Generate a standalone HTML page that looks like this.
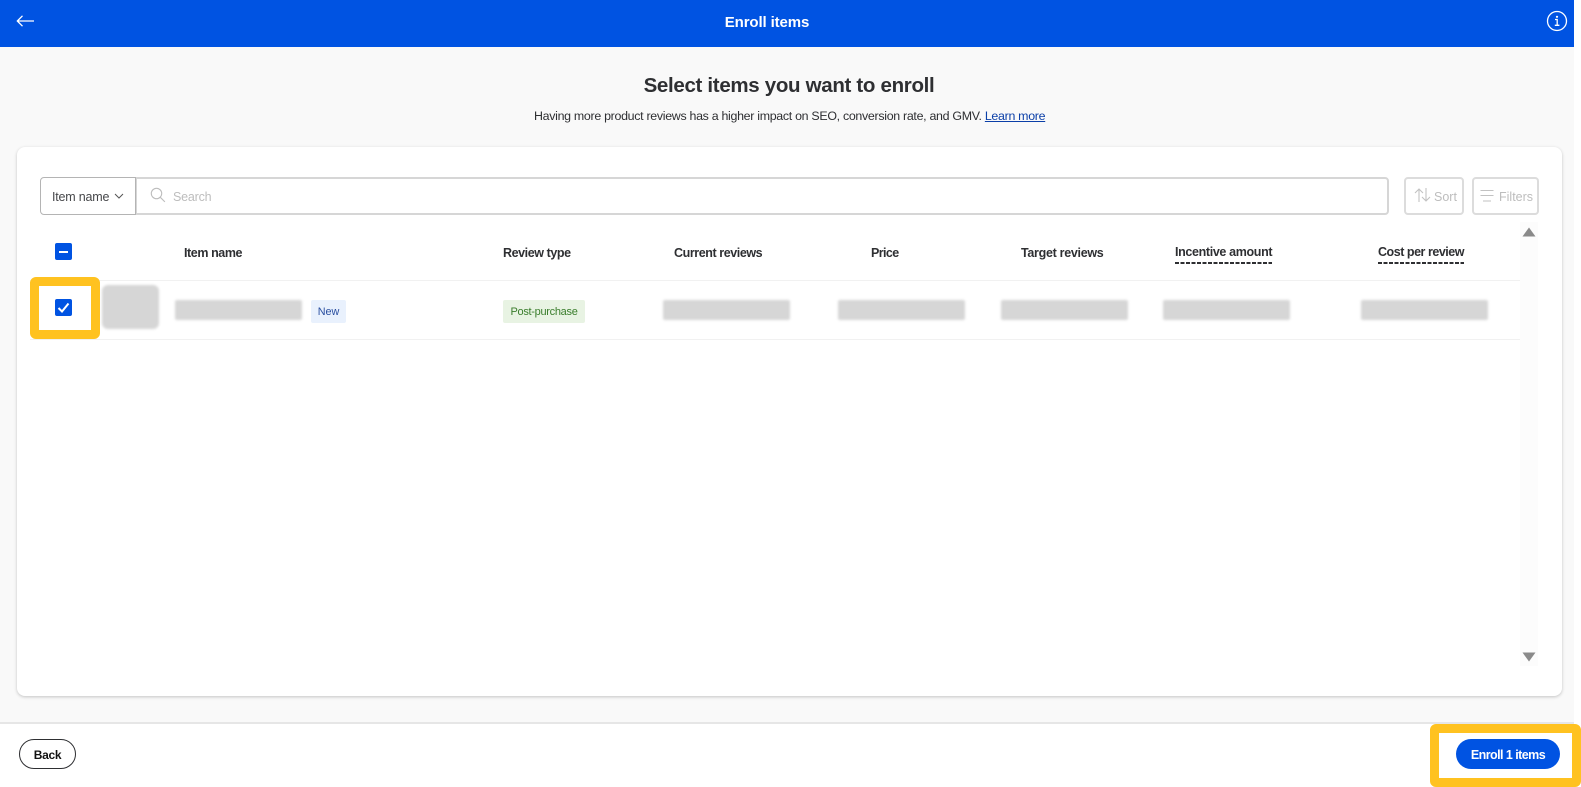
<!DOCTYPE html>
<html lang="en"><head><meta charset="utf-8"><title>Enroll items</title>
<style>
html,body{margin:0;padding:0;background:#fff}
body{width:1581px;height:787px;position:relative;overflow:hidden;font-family:"Liberation Sans",sans-serif;color:#2e2f32}
.a{position:absolute;white-space:nowrap}
.th{font-size:12.5px;font-weight:700;line-height:16px;top:245px;letter-spacing:-.42px}
.ul{top:244px;padding-bottom:4px;background:repeating-linear-gradient(90deg,#2e2f32 0 4px,transparent 4px 5.5px) left bottom/100% 2px no-repeat;letter-spacing:-.35px}
.bar{position:absolute;top:300px;height:20px;width:127px;background:#d6d6d6;filter:blur(1.2px);border-radius:2px}
.cb{position:absolute;left:55px;width:17px;height:17px;background:#0053e2;border-radius:2px}
</style></head><body>
<div class="a" style="left:0;top:0;width:1574px;height:787px;background:#f9f9f9"></div>
<div class="a" style="left:0;top:0;width:1574px;height:47px;background:#0053e2"></div>
<svg class="a" style="left:14px;top:12px" width="22" height="18" viewBox="0 0 22 18"><path d="M20 9H3.500M8.500 3.800L3.300 9l5.200 5.200" fill="none" stroke="#fff" stroke-width="1.300"/></svg>
<div class="a" style="left:0;width:1534px;top:14px;text-align:center;font-size:15px;font-weight:700;color:#fff;line-height:18px;letter-spacing:-.12px">Enroll items</div>
<svg class="a" style="left:1546px;top:10px" width="22" height="22" viewBox="0 0 22 22"><circle cx="11" cy="11" r="9.500" fill="none" stroke="#fff" stroke-width="1.300"/><path d="M9 9.500h2.200V15M8.800 15.300h4.600" fill="none" stroke="#fff" stroke-width="1.300"/><circle cx="11" cy="6.800" r="1.100" fill="#fff"/></svg>

<div class="a" style="left:0;width:1578px;top:74px;text-align:center;font-size:20.5px;font-weight:700;line-height:24px;letter-spacing:-.32px">Select items you want to enroll</div>
<div class="a" style="left:534px;top:108px;font-size:12.4px;line-height:16px;letter-spacing:-.3px">Having more product reviews has a higher impact on SEO, conversion rate, and GMV. <span style="color:#0b3fa8;text-decoration:underline">Learn more</span></div>

<div class="a" style="left:17px;top:147px;width:1545px;height:549px;background:#fff;border-radius:8px;box-shadow:0 1px 3px rgba(0,0,0,.22)"></div>

<div class="a" style="left:135px;top:177px;width:1254px;height:38px;box-sizing:border-box;border:2px solid #d6d6d6;border-radius:0 4px 4px 0;background:#fff"></div>
<div class="a" style="left:40px;top:177px;width:96px;height:38px;box-sizing:border-box;border:1px solid #b4b4b4;border-radius:4px 0 0 4px;background:#fff"></div>
<div class="a" style="left:52px;top:189px;font-size:12.5px;line-height:16px;color:#46474a;letter-spacing:-.2px">Item name</div>
<svg class="a" style="left:114px;top:192px" width="10" height="8" viewBox="0 0 10 8"><path d="M1 2l4 4 4-4" fill="none" stroke="#555" stroke-width="1"/></svg>
<svg class="a" style="left:150px;top:187px" width="16" height="16" viewBox="0 0 16 16"><circle cx="6.500" cy="6.500" r="5.200" fill="none" stroke="#bdbdbd" stroke-width="1.100"/><path d="M10.300 10.300l4.600 4.600" stroke="#bdbdbd" stroke-width="1.100"/></svg>
<div class="a" style="left:173px;top:189px;font-size:12.5px;line-height:16px;color:#bdbdbd;letter-spacing:-.2px">Search</div>

<div class="a" style="left:1404px;top:177px;width:60px;height:38px;box-sizing:border-box;border:2px solid #dcdcdc;border-radius:4px;background:#fff"></div>
<svg class="a" style="left:1414px;top:187px" width="17" height="16" viewBox="0 0 17 16"><path d="M5 15V2M1 6l4-4 4 4M12 1v13M8 10l4 4 4-4" fill="none" stroke="#c2c2c2" stroke-width="1.100"/></svg>
<div class="a" style="left:1434px;top:189px;font-size:12.5px;line-height:16px;color:#bdbdbd">Sort</div>
<div class="a" style="left:1472px;top:177px;width:67px;height:38px;box-sizing:border-box;border:2px solid #dcdcdc;border-radius:4px;background:#fff"></div>
<svg class="a" style="left:1480px;top:189px" width="15" height="14" viewBox="0 0 15 14"><path d="M0.500 1.500h13M0.500 6.500h13M3 12h8" fill="none" stroke="#c2c2c2" stroke-width="1.100"/></svg>
<div class="a" style="left:1499px;top:189px;font-size:12.5px;line-height:16px;color:#bdbdbd">Filters</div>

<div class="a" style="left:1520px;top:222px;width:18px;height:444px;background:#fcfcfc"></div>
<svg class="a" style="left:1522px;top:227px" width="14" height="10" viewBox="0 0 14 10"><path d="M7 0.500L13.500 9.500H0.500z" fill="#8a8a8a"/></svg>
<svg class="a" style="left:1522px;top:652px" width="14" height="10" viewBox="0 0 14 10"><path d="M0.500 0.500H13.500L7 9.500z" fill="#8a8a8a"/></svg>

<div class="cb" style="top:243px"><div style="position:absolute;left:4px;top:7.500px;width:9px;height:2px;background:#fff"></div></div>
<div class="a th" style="left:184px">Item name</div>
<div class="a th" style="left:503px">Review type</div>
<div class="a th" style="left:674px">Current reviews</div>
<div class="a th" style="left:871px;letter-spacing:-.6px">Price</div>
<div class="a th" style="left:1021px;letter-spacing:-.3px">Target reviews</div>
<div class="a th ul" style="left:1175px">Incentive amount</div>
<div class="a th ul" style="left:1378px;letter-spacing:-.47px">Cost per review</div>

<div class="a" style="left:30px;top:280px;width:1490px;height:1px;background:#f1f1f1"></div>
<div class="a" style="left:30px;top:339px;width:1490px;height:1px;background:#f1f1f1"></div>

<div class="a" style="left:102px;top:285px;width:57px;height:44px;background:#d6d6d6;border-radius:6px;filter:blur(1.2px)"></div>
<div class="bar" style="left:175px"></div>
<div class="a" style="left:311px;top:300px;width:35px;height:23px;background:#e9f1fd;border-radius:2px;color:#2a4fa0;font-size:10.8px;line-height:24px;text-align:center">New</div>
<div class="a" style="left:503px;top:300px;width:82px;height:23px;background:#e8f3e3;border-radius:2px;color:#3a7d2c;font-size:11px;line-height:24px;text-align:center;letter-spacing:-.3px">Post-purchase</div>
<div class="bar" style="left:663px"></div>
<div class="bar" style="left:838px"></div>
<div class="bar" style="left:1001px"></div>
<div class="bar" style="left:1163px"></div>
<div class="bar" style="left:1361px"></div>

<div class="a" style="left:30px;top:277px;width:70px;height:62px;box-sizing:border-box;border:9px solid #ffc220;border-radius:6px;background:#fff"></div>
<div class="cb" style="top:299px"><svg width="17" height="17" viewBox="0 0 17 17" style="display:block"><path d="M3.500 9l3.500 3.500 6.500-8" fill="none" stroke="#fff" stroke-width="2"/></svg></div>

<div class="a" style="left:0;top:722px;width:1574px;height:65px;background:#fff;border-top:2px solid #e6e6e6;box-sizing:border-box"></div>
<div class="a" style="left:19px;top:739px;width:57px;height:30px;box-sizing:border-box;border:1px solid #2e2f32;border-radius:15px;background:#fff;color:#111;font-size:12px;font-weight:700;line-height:30px;text-align:center;letter-spacing:-.3px">Back</div>
<div class="a" style="left:1430px;top:724px;width:151px;height:63px;box-sizing:border-box;border:9px solid #ffc220;border-radius:6px;background:#fff"></div>
<div class="a" style="left:1456px;top:739px;width:104px;height:30px;border-radius:15px;background:#0053e2;color:#fff;font-size:12.5px;font-weight:700;line-height:32px;text-align:center;letter-spacing:-.55px">Enroll 1 items</div>
</body></html>
